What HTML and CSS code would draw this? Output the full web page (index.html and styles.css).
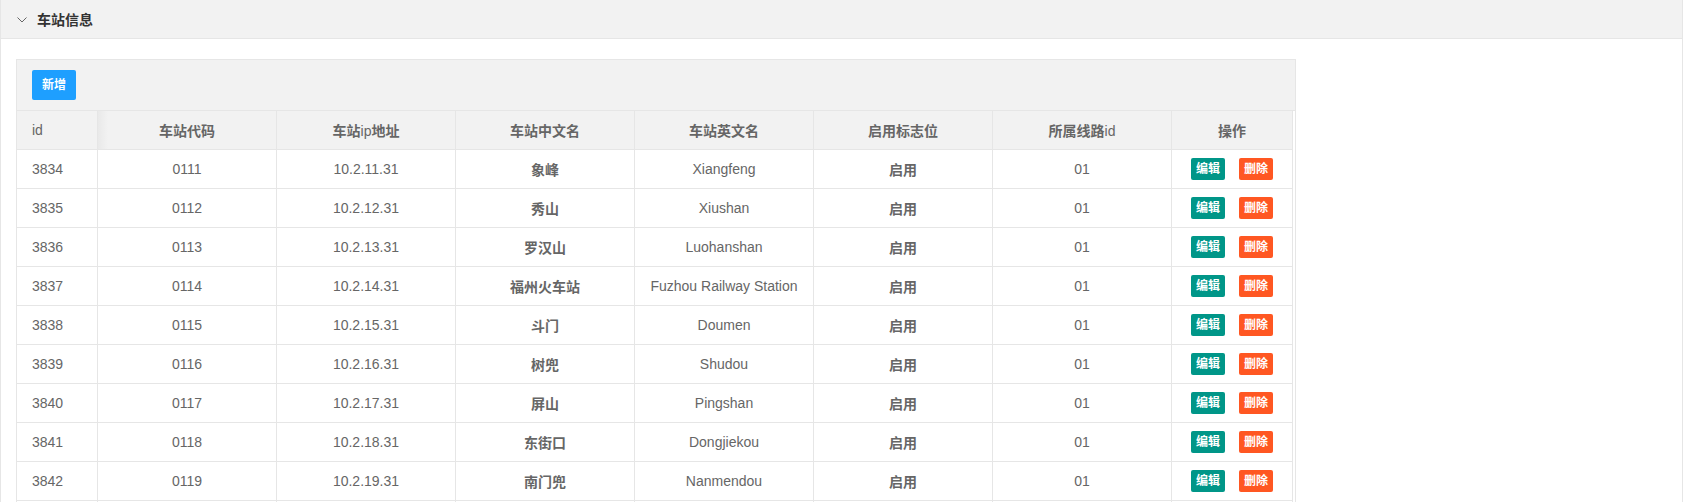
FILE: index.html
```html
<!DOCTYPE html>
<html lang="zh-CN">
<head>
<meta charset="utf-8">
<title>车站信息</title>
<link rel="stylesheet" href="styles.css">
</head>
<body>
<div class="panel">
  <div class="panel-title">
    <svg class="chev" width="10" height="6" viewBox="0 0 10 6"><path d="M0.5 0.5 L5 5 L9.5 0.5" fill="none" stroke="#666" stroke-width="1"/></svg>
    <span>车站信息</span>
  </div>
  <div class="panel-body">
    <div class="table-view">
      <div class="toolbar"><span class="btn btn-sm btn-blue">新增</span></div>
      <table class="grid">
        <colgroup>
          <col class="c-id"><col class="c-std"><col class="c-std"><col class="c-std"><col class="c-std"><col class="c-std"><col class="c-std"><col class="c-op">
        </colgroup>
        <thead>
          <tr>
            <th class="left"><span class="n">id</span></th>
            <th class="shade">车站代码</th>
            <th>车站<span class="n">ip</span>地址</th>
            <th>车站中文名</th>
            <th>车站英文名</th>
            <th>启用标志位</th>
            <th>所属线路<span class="n">id</span></th>
            <th>操作</th>
          </tr>
        </thead>
        <tbody>
          <tr><td class="left">3834</td><td>0111</td><td>10.2.11.31</td><td class="b">象峰</td><td>Xiangfeng</td><td class="b">启用</td><td>01</td><td><div class="ops"><span class="btn btn-xs btn-green">编辑</span><span class="btn btn-xs btn-red">删除</span></div></td></tr>
          <tr><td class="left">3835</td><td>0112</td><td>10.2.12.31</td><td class="b">秀山</td><td>Xiushan</td><td class="b">启用</td><td>01</td><td><div class="ops"><span class="btn btn-xs btn-green">编辑</span><span class="btn btn-xs btn-red">删除</span></div></td></tr>
          <tr><td class="left">3836</td><td>0113</td><td>10.2.13.31</td><td class="b">罗汉山</td><td>Luohanshan</td><td class="b">启用</td><td>01</td><td><div class="ops"><span class="btn btn-xs btn-green">编辑</span><span class="btn btn-xs btn-red">删除</span></div></td></tr>
          <tr><td class="left">3837</td><td>0114</td><td>10.2.14.31</td><td class="b">福州火车站</td><td>Fuzhou Railway Station</td><td class="b">启用</td><td>01</td><td><div class="ops"><span class="btn btn-xs btn-green">编辑</span><span class="btn btn-xs btn-red">删除</span></div></td></tr>
          <tr><td class="left">3838</td><td>0115</td><td>10.2.15.31</td><td class="b">斗门</td><td>Doumen</td><td class="b">启用</td><td>01</td><td><div class="ops"><span class="btn btn-xs btn-green">编辑</span><span class="btn btn-xs btn-red">删除</span></div></td></tr>
          <tr><td class="left">3839</td><td>0116</td><td>10.2.16.31</td><td class="b">树兜</td><td>Shudou</td><td class="b">启用</td><td>01</td><td><div class="ops"><span class="btn btn-xs btn-green">编辑</span><span class="btn btn-xs btn-red">删除</span></div></td></tr>
          <tr><td class="left">3840</td><td>0117</td><td>10.2.17.31</td><td class="b">屏山</td><td>Pingshan</td><td class="b">启用</td><td>01</td><td><div class="ops"><span class="btn btn-xs btn-green">编辑</span><span class="btn btn-xs btn-red">删除</span></div></td></tr>
          <tr><td class="left">3841</td><td>0118</td><td>10.2.18.31</td><td class="b">东街口</td><td>Dongjiekou</td><td class="b">启用</td><td>01</td><td><div class="ops"><span class="btn btn-xs btn-green">编辑</span><span class="btn btn-xs btn-red">删除</span></div></td></tr>
          <tr><td class="left">3842</td><td>0119</td><td>10.2.19.31</td><td class="b">南门兜</td><td>Nanmendou</td><td class="b">启用</td><td>01</td><td><div class="ops"><span class="btn btn-xs btn-green">编辑</span><span class="btn btn-xs btn-red">删除</span></div></td></tr>
          <tr><td class="left">&nbsp;</td><td>&nbsp;</td><td>&nbsp;</td><td>&nbsp;</td><td>&nbsp;</td><td>&nbsp;</td><td>&nbsp;</td><td>&nbsp;</td></tr>
        </tbody>
      </table>
    </div>
  </div>
</div>
</body>
</html>
```

FILE: styles.css
```css
html, body {
  margin: 0;
  padding: 0;
  background: #fff;
}
body {
  font-family: "Liberation Sans", "Noto Sans CJK SC", sans-serif;
  font-size: 14px;
  color: #666;
}
.panel {
  margin-right: 4px;
  border-left: 1px solid #e6e6e6;
  border-right: 1px solid #e6e6e6;
}
.panel-title {
  height: 38px;
  background: #f2f2f2;
  border-bottom: 1px solid #e6e6e6;
  display: flex;
  align-items: center;
  padding-left: 16px;
  gap: 10px;
  color: #333;
  font-weight: bold;
  font-size: 14px;
}
.chev {
  display: block;
  margin-top: 1px;
}
.panel-body {
  padding: 20px 15px 0;
}
.table-view {
  width: 1280px;
  box-sizing: border-box;
  border: 1px solid #e6e6e6;
  background: #fff;
}
.toolbar {
  height: 30px;
  padding: 10px 15px;
  background: #f2f2f2;
  border-bottom: 1px solid #e6e6e6;
}
.btn {
  display: inline-block;
  color: #fff;
  font-weight: bold;
  font-size: 12px;
  border-radius: 2px;
  text-align: center;
  white-space: nowrap;
}
.btn-sm {
  height: 30px;
  line-height: 30px;
  padding: 0 10px;
}
.btn-xs {
  height: 22px;
  line-height: 22px;
  padding: 0 5px;
}
.btn-blue { background: #1e9fff; }
.btn-green { background: #009688; }
.btn-red { background: #ff5722; }
.grid {
  width: 1276px;
  table-layout: fixed;
  border-collapse: separate;
  border-spacing: 0;
}
.c-id { width: 81px; }
.c-std { width: 179px; }
.c-op { width: 121px; }
.grid th,
.grid td {
  height: 38px;
  padding: 0 15px;
  border-right: 1px solid #e6e6e6;
  border-bottom: 1px solid #e6e6e6;
  text-align: center;
  vertical-align: middle;
  white-space: nowrap;
  overflow: hidden;
  color: #666;
}
.grid th {
  background: #f2f2f2;
  font-weight: bold;
}
.grid th.shade {
  background: linear-gradient(to right, #e9e9e9, #f2f2f2 10px);
}
.grid .left {
  text-align: left;
}
.grid .n {
  font-weight: normal;
}
.grid td.b {
  font-weight: bold;
}
.ops {
  display: flex;
  justify-content: center;
  gap: 14px;
}
```
